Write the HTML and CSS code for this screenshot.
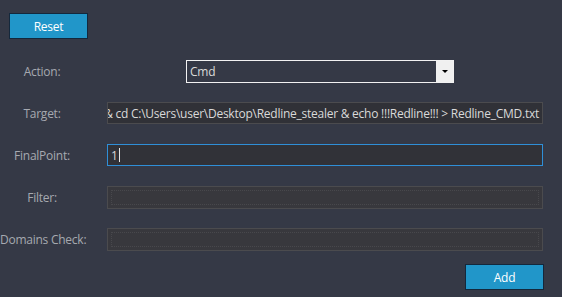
FILE: index.html
```html
<!DOCTYPE html>
<html lang="en">
<head>
    <meta charset="UTF-8">
    <title>Redline Panel</title>
    <link rel="stylesheet" href="styles.css">
</head>
<body>
    <div class="panel">
        <div class="toolbar">
            <button class="btn">Reset</button>
        </div>

        <div class="form">
            <label class="label">Action:</label>
            <div class="select">
                <span class="select-value">Cmd</span>
                <span class="select-arrow"></span>
            </div>

            <label class="label">Target:</label>
            <div class="field field-scrolled">
                <span class="field-text">/c &amp; cd C:\Users\user\Desktop\Redline_stealer &amp; echo !!!Redline!!! &gt; Redline_CMD.txt</span>
            </div>

            <label class="label">FinalPoint:</label>
            <div class="field field-focus">
                <span class="field-text">1</span><span class="caret"></span>
            </div>

            <label class="label">Filter:</label>
            <div class="field field-empty"></div>

            <label class="label">Domains Check:</label>
            <div class="field field-empty"></div>
        </div>

        <div class="actions">
            <button class="btn">Add</button>
        </div>
    </div>
</body>
</html>
```

FILE: styles.css
```css
* {
    margin: 0;
    padding: 0;
    box-sizing: border-box;
}

body {
    font-family: "Open Sans", "Noto Sans", sans-serif;
    font-size: 12px;
    letter-spacing: -0.25px;
    background: #353946;
    width: 562px;
    height: 297px;
    overflow: hidden;
}

.panel {
    padding-top: 13px;
}

.toolbar {
    padding-left: 9px;
}

.btn {
    width: 79px;
    height: 26px;
    background: #2196c9;
    border: 1px solid #14283c;
    color: #fff;
    font-family: inherit;
    font-size: 12px;
    letter-spacing: inherit;
}

.form {
    display: grid;
    grid-template-columns: 84px 436px;
    grid-auto-rows: 22px;
    column-gap: 23px;
    row-gap: 20px;
    margin-top: 21px;
    align-items: center;
}

.label {
    color: #a6a9b0;
    text-align: center;
    white-space: nowrap;
}

.select {
    display: flex;
    align-items: stretch;
    width: 268px;
    height: 23px;
    margin-left: 79px;
    border: 1px solid #f2f2f2;
    background: #353946;
}

.select-value {
    flex: 1;
    color: #d9d9d9;
    padding-left: 3px;
    line-height: 21px;
}

.select-arrow {
    width: 17px;
    background: #f0f0f0;
    display: flex;
    align-items: center;
    justify-content: center;
}

.select-arrow::after {
    content: "";
    border-left: 3px solid transparent;
    border-right: 3px solid transparent;
    border-top: 3px solid #000;
}

.field {
    display: flex;
    align-items: center;
    height: 22px;
    overflow: hidden;
    white-space: nowrap;
    border: 1px solid #4b4b4e;
    background: #303137;
    color: #d9d9d9;
    padding: 0 3px;
}

.field-scrolled {
    justify-content: flex-end;
}

.field-focus {
    border-color: #2f8fd8;
    background: #313238;
}

.field-empty {
    background: #38383d;
    height: 23px;
    outline: 1px dotted #48484c;
    outline-offset: -5px;
}

.caret {
    width: 1px;
    height: 14px;
    background: #e6e6e6;
    margin-left: 1px;
}

.actions {
    display: flex;
    justify-content: flex-end;
    width: 544px;
    margin-top: 14px;
}
```
